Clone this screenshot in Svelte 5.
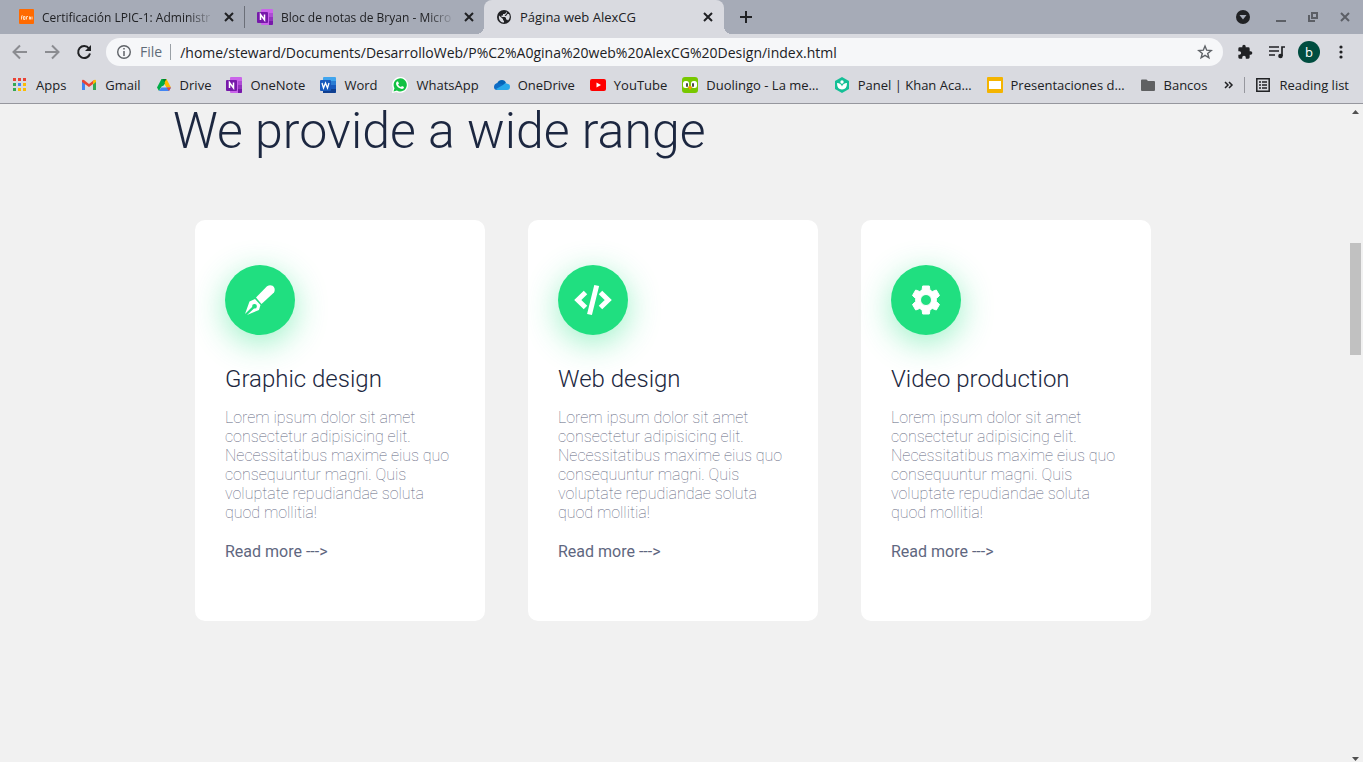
<script>
  const tabs = [
    { icon: 'orange', title: 'Certificación LPIC-1: Administr', active: false },
    { icon: 'onenote', title: 'Bloc de notas de Bryan - Micro', active: false },
    { icon: 'globe', title: 'Página web AlexCG', active: true }
  ];
  const bookmarks = [
    { icon: 'apps', label: 'Apps' },
    { icon: 'gmail', label: 'Gmail' },
    { icon: 'drive', label: 'Drive' },
    { icon: 'onenote', label: 'OneNote' },
    { icon: 'word', label: 'Word' },
    { icon: 'whatsapp', label: 'WhatsApp' },
    { icon: 'onedrive', label: 'OneDrive' },
    { icon: 'youtube', label: 'YouTube' },
    { icon: 'duolingo', label: 'Duolingo - La me…' },
    { icon: 'khan', label: 'Panel | Khan Aca…' },
    { icon: 'slides', label: 'Presentaciones d…' },
    { icon: 'folder', label: 'Bancos' }
  ];
  const services = [
    { icon: 'pen', title: 'Graphic design' },
    { icon: 'code', title: 'Web design' },
    { icon: 'gear', title: 'Video production' }
  ];
  const blurb =
    'Lorem ipsum dolor sit amet consectetur adipisicing elit. Necessitatibus maxime eius quo consequuntur magni. Quis voluptate repudiandae soluta quod mollitia!';
  const dots = ['#ea4335', '#ea4335', '#ea4335', '#34a853', '#4285f4', '#fbbc04', '#34a853', '#fbbc04', '#fbbc04'];
  let address = '/home/steward/Documents/DesarrolloWeb/P%C2%A0gina%20web%20AlexCG%20Design/index.html';
</script>

{#snippet site(name)}
  <svg class="fav" viewBox="0 0 16 16" aria-hidden="true">
    {#if name === 'orange'}
      <rect width="15" height="15" x="1" rx="1" fill="#ff6a00" />
      <path d="M3.500 10.500V7.500q0-1 1-1M3 8h1.500M5.500 7.500v3H7V7.500zM8.500 10.500V7.500H10M11.500 7.500v3M11.500 8h1v2.500M14 7.500v3" fill="none" stroke="#ffd9b8" />
    {:else if name === 'onenote'}
      <rect x="4" width="12" height="16" rx="1" fill="#ca64ea" />
      <path d="M12 4h4v4h-4z" fill="#ae4bd5" />
      <path d="M12 8h4v4h-4z" fill="#9332bf" />
      <path d="M12 12h4v3q0 1-1 1h-3z" fill="#7719aa" />
      <rect y="3" width="11" height="11" rx="1" fill="#7719aa" />
      <path d="M3.500 11V5.500L7.500 11V5.500" fill="none" stroke="#fff" stroke-width="1.500" />
    {:else if name === 'globe'}
      <circle cx="8" cy="8" r="7" fill="#202124" />
      <path d="M3 6.500 7 10v1l1 1v1.500C4.500 13.500 2.300 10.500 3 6.500zM10 2.500V4L8.500 5H7v1.500H5.500V8H9l1 1v1.500h1l1 1c2-2 2.200-4.500 1-6.500L11.500 5 10 7H8.500L11 4z" fill="#d9dae0" />
    {:else if name === 'apps'}
      {#each dots as color, i}
        <rect x={1 + (i % 3) * 5} y={1 + Math.floor(i / 3) * 5} width="3" height="3" fill={color} />
      {/each}
    {:else if name === 'gmail'}
      <path d="M1 4v9h3V6z" fill="#4285f4" />
      <path d="M12 6v7h3V4z" fill="#34a853" />
      <path d="M1 4q0-2 2-1l5 4 5-4-1 4-4 3-7-5z" fill="#ea4335" />
      <path d="m12 4 1-1q2-1 2 1v1l-3 2.500z" fill="#fbbc04" />
    {:else if name === 'drive'}
      <path d="m10.500 2 4.500 8.500h-4.500L5.500 2z" fill="#ffba00" />
      <path d="M5.500 2h5L8 6z" fill="#00832d" />
      <path d="M5.500 2h1L9 6.300l-1.300 2.200L5.500 9.500 3 14l-2-3.500z" fill="#00ac47" />
      <path d="M5.200 10.500H15L13 14H3z" fill="#4285f4" />
      <path d="M10.500 10.500H15L13 14z" fill="#ea4335" />
    {:else if name === 'word'}
      <rect x="3" width="13" height="16" rx="1" fill="#41a5ee" />
      <path d="M3 4h13v4H3z" fill="#2b7cd3" />
      <path d="M3 8h13v4H3z" fill="#185abd" />
      <path d="M3 12h13v3q0 1-1 1H3z" fill="#103f91" />
      <rect y="3" width="11" height="11" rx="1" fill="#185abd" />
      <path d="m2 6 1.500 5 2-5 2 5L9 6" fill="none" stroke="#fff" stroke-width="1.300" />
    {:else if name === 'whatsapp'}
      <path d="m0 16 1-4.500A8 8 0 1 1 4.500 15z" fill="#fff" />
      <path d="m1.500 14.500 1-3.300a6.600 6.600 0 1 1 2.400 2.400z" fill="#12c143" />
      <path d="M5 4.500h1l1 2-1 1q1 2 3 2.500l1-1 2 1q0 2-2 2-5-1-6-5 0-2 1-2.500z" fill="#fff" />
    {:else if name === 'onedrive'}
      <path d="M3 7q1-4 5-4 3 0 4 3l-4 4z" fill="#0364b8" />
      <path d="M0 10q0-3 3-4l5 1 4 4-9 2q-3 0-3-3z" fill="#0f6cc5" />
      <path d="m2 12 7-4q2-3 5-1 2 0 2 3t-3 3H4q-1 0-2-1z" fill="#28a8ea" />
    {:else if name === 'youtube'}
      <rect y="2" width="16" height="12" rx="2" fill="#f00" />
      <path d="m6.500 5.500 4.500 2.500-4.500 2.500z" fill="#fff" />
    {:else if name === 'duolingo'}
      <rect width="16" height="16" rx="3" fill="#78c800" />
      <rect x="1" y="4" width="6" height="7" rx="2.500" fill="#fff" />
      <rect x="9" y="4" width="6" height="7" rx="2.500" fill="#fff" />
      <rect x="4" y="6" width="2" height="4" rx="1" fill="#4b4b4b" />
      <rect x="10" y="6" width="2" height="4" rx="1" fill="#4b4b4b" />
      <path d="M6 10q2-2 4 0l-2 3z" fill="#ff9600" />
    {:else if name === 'khan'}
      <path d="m8 0 7 4v8l-7 4-7-4V4z" fill="#14bf96" />
      <circle cx="8" cy="5" r="1.700" fill="#fff" />
      <path d="M3 6q4 0 5 3.500Q9 6 13 6q0 6.500-5 6.500T3 6z" fill="#fff" />
    {:else if name === 'slides'}
      <rect width="16" height="16" rx="1" fill="#f4b400" />
      <path d="M2 4h12v8H2z" fill="#fff" />
    {:else if name === 'folder'}
      <path d="M1 3.500q0-1 1-1h4.500L8 4h6q1 0 1 1v8q0 1-1 1H2q-1 0-1-1z" fill="#5f6062" />
    {/if}
  </svg>
{/snippet}

<div class="window">
  <header>
    <div class="strip">
      {#each tabs as tab}
        <div class="tab" class:active={tab.active}>
          {@render site(tab.icon)}
          <span class="tab-title" class:fade={!tab.active}>{tab.title}</span>
          <button class="close" aria-label="Close tab">
            <svg width="10" height="10" viewBox="0 0 10 10"><path d="m1 1 8 8M9 1 1 9" /></svg>
          </button>
        </div>
      {/each}
      <button class="new-tab" aria-label="New tab">
        <svg width="12" height="12" viewBox="0 0 12 12"><path d="M6 0v12M0 6h12" /></svg>
      </button>
      <div class="win-controls">
        <button aria-label="Search tabs">
          <svg width="14" height="14" viewBox="0 0 14 14"><circle cx="7" cy="7" r="7" fill="#202124" /><path d="M3.500 5h7L7 9.500z" fill="#a6abb7" /></svg>
        </button>
        <button aria-label="Minimize">
          <svg width="10" height="10" viewBox="0 0 10 10"><path d="M0 9h10" class="ctl" /></svg>
        </button>
        <button aria-label="Restore">
          <svg width="10" height="10" viewBox="0 0 10 10"><path d="M4 1h5v5H4zM1 3v6h6" class="ctl" /></svg>
        </button>
        <button aria-label="Close window">
          <svg width="10" height="10" viewBox="0 0 10 10"><path d="m1 1 8 8M9 1 1 9" class="ctl" /></svg>
        </button>
      </div>
    </div>

    <div class="toolbar">
      <div class="nav">
        <button aria-label="Back"><svg width="16" height="16" viewBox="0 0 16 16"><path d="M15 8H2M8 1.500 1.500 8 8 14.500" class="faded" /></svg></button>
        <button aria-label="Forward"><svg width="16" height="16" viewBox="0 0 16 16"><path d="M1 8h13M8 1.500 14.500 8 8 14.500" class="faded" /></svg></button>
        <button aria-label="Reload"><svg width="16" height="16" viewBox="0 0 16 16"><path d="M13 4.500A6 6 0 1 0 14 9.500" fill="none" stroke="#202124" stroke-width="2" /><path d="M15 1v6H9z" fill="#202124" /></svg></button>
      </div>
      <div class="omnibox">
        <svg width="16" height="16" viewBox="0 0 16 16"><circle cx="8" cy="8" r="6.300" fill="none" stroke="#5f6368" stroke-width="1.400" /><path d="M8 7v5M8 4v1.500" stroke="#5f6368" stroke-width="1.500" /></svg>
        <label for="address">File</label>
        <input id="address" type="text" bind:value={address} spellcheck="false" />
        <button aria-label="Bookmark this page">
          <svg width="16" height="16" viewBox="0 0 16 16"><path d="m8 2 1.700 4.200 4.500.3-3.500 2.900 1.200 4.400L8 11.400l-3.900 2.400 1.200-4.400-3.500-2.900 4.500-.3z" fill="none" stroke="#5f6368" stroke-width="1.400" /></svg>
        </button>
      </div>
      <div class="tools">
        <button aria-label="Extensions">
          <svg width="16" height="16" viewBox="0 0 24 24"><path d="M20.500 11H19V7a2 2 0 0 0-2-2h-4V3.500a2.500 2.500 0 0 0-5 0V5H4a2 2 0 0 0-2 2v3.800h1.500a2.700 2.700 0 0 1 0 5.400H2V20a2 2 0 0 0 2 2h3.800v-1.500a2.700 2.700 0 0 1 5.400 0V22H17a2 2 0 0 0 2-2v-4h1.500a2.500 2.500 0 0 0 0-5z" fill="#202124" /></svg>
        </button>
        <button aria-label="Media controls">
          <svg width="16" height="16" viewBox="0 0 16 16"><path d="M0 3h10M0 7h10M0 11h6M13 12V3h3" fill="none" stroke="#202124" stroke-width="1.700" /><circle cx="11.500" cy="12" r="2.300" fill="#202124" /></svg>
        </button>
        <button class="avatar" aria-label="Profile">b</button>
        <button aria-label="Menu">
          <svg width="16" height="16" viewBox="0 0 16 16" fill="#202124"><circle cx="8" cy="3" r="1.600" /><circle cx="8" cy="8" r="1.600" /><circle cx="8" cy="13" r="1.600" /></svg>
        </button>
      </div>
    </div>

    <nav class="bookmarks" aria-label="Bookmarks">
      {#each bookmarks as item}
        <a href="#top">{@render site(item.icon)}<span>{item.label}</span></a>
      {/each}
      <div class="extra">
        <button aria-label="More bookmarks">
          <svg width="10" height="8" viewBox="0 0 10 8"><path d="m1 1 3 3-3 3M5 1l3 3-3 3" fill="none" stroke="#202124" stroke-width="1.500" /></svg>
        </button>
        <button class="reading">
          <svg class="fav" viewBox="0 0 16 16"><path d="M1.800 1.800h12.400v12.400H1.800z" fill="none" stroke="#202124" stroke-width="1.500" /><path d="M4 5h2M4 8h2M4 11h2M7 5h5M7 8h5M7 11h5" stroke="#202124" stroke-width="1.500" /></svg>
          <span>Reading list</span>
        </button>
      </div>
    </nav>
  </header>

  <div class="view">
    <main id="top">
      <section>
        <h1>We provide a wide range</h1>
        <div class="cards">
          {#each services as service}
            <article>
              <div class="badge">
                {#if service.icon === 'pen'}
                  <svg width="40" height="40" viewBox="0 0 40 40" fill="#fff"><path d="m16 17.500 11-11.300c5-3 9.500 1.500 7 6.300L21.500 24z" /><path fill-rule="evenodd" d="m15 19 5.500 6-1.500 5-12 5 7-6.500a2.300 2.300 0 1 0-1.700-1.700L5 34l4.500-12.500z" /></svg>
                {:else if service.icon === 'code'}
                  <svg width="40" height="40" viewBox="0 0 40 40" fill="none" stroke="#fff" stroke-width="5"><path d="M23.700 5.500 16.500 34.500M12.500 12.500 4.800 20l7.700 7.500M27.500 12.500l7.700 7.500-7.700 7.500" /></svg>
                {:else}
                  <svg width="40" height="40" viewBox="0 0 40 40" fill="#fff" stroke="#fff" stroke-linejoin="round"><path fill-rule="evenodd" d="M16.700 6h6.600l.7 4.200 2.300 1.300 4-1.500 3.200 5.500-3.200 3v3l3.200 3-3.200 5.500-4-1.500-2.300 1.300-.7 4.200h-6.600l-.7-4.200-2.300-1.300-4 1.500-3.200-5.500 3.200-3v-3l-3.200-3L9.700 10l4 1.500 2.300-1.300zM20 14.500a5.500 5.500 0 1 0 0 11 5.500 5.500 0 0 0 0-11z" /></svg>
                {/if}
              </div>
              <h2>{service.title}</h2>
              <p>{blurb}</p>
              <a href="#top">Read more ---&gt;</a>
            </article>
          {/each}
        </div>
      </section>
    </main>
    <div class="scrollbar" aria-hidden="true">
      <svg width="15" height="15" viewBox="0 0 15 15"><path d="M4 10h7L7.500 6z" fill="#505050" /></svg>
      <div class="before"></div>
      <div class="thumb"></div>
      <div class="after"></div>
      <svg width="15" height="15" viewBox="0 0 15 15"><path d="M4 10h7L7.500 14z" fill="#505050" /></svg>
    </div>
  </div>
</div>

<style>
  :global(body) {
    margin: 0;
  }
  .window {
    display: flex;
    flex-direction: column;
    min-height: 100vh;
    background: #f1f1f1;
    font-family: 'Open Sans', 'Noto Sans', sans-serif;
    font-size: 13px;
    color: #202124;
  }
  button {
    display: flex;
    align-items: center;
    justify-content: center;
    padding: 0;
    border: 0;
    background: none;
    font: inherit;
    color: inherit;
  }
  svg {
    display: block;
    flex: none;
  }
  a {
    color: inherit;
    text-decoration: none;
  }
  .fav {
    width: 16px;
    height: 16px;
  }
  header {
    background: #d9dae0;
    border-bottom: 1px solid #96979e;
  }
  .strip {
    display: flex;
    height: 34px;
    padding-left: 6px;
    background: #a6abb7;
  }
  .tab {
    display: flex;
    align-items: center;
    gap: 8px;
    box-sizing: border-box;
    width: 239px;
    padding: 0 9px 0 12px;
  }
  .tab:first-child {
    border-right: 1px solid #6b6f78;
    border-image: linear-gradient(transparent 7px, #6b6f78 7px 27px, transparent 27px) 1;
  }
  .tab.active {
    position: relative;
    width: 240px;
    padding-right: 10px;
    background: #d9dae0;
    border-radius: 8px 8px 0 0;
  }
  .tab.active::before,
  .tab.active::after {
    content: '';
    position: absolute;
    bottom: 0;
    width: 8px;
    height: 8px;
  }
  .tab.active::before {
    right: 100%;
    background: radial-gradient(circle at 0 0, transparent 8px, #d9dae0 8px);
  }
  .tab.active::after {
    left: 100%;
    background: radial-gradient(circle at 100% 0, transparent 8px, #d9dae0 8px);
  }
  .tab-title {
    flex: 1;
    min-width: 0;
    white-space: nowrap;
  }
  .tab-title.fade {
    font-size: 12px;
    mask-image: linear-gradient(to right, #000 calc(100% - 28px), transparent);
  }
  .close {
    width: 12px;
    height: 16px;
  }
  .close path,
  .new-tab path {
    stroke: #202124;
    stroke-width: 2;
  }
  .new-tab {
    width: 44px;
  }
  .win-controls {
    display: flex;
    align-items: center;
    gap: 22px;
    margin-left: auto;
    padding-right: 13px;
  }
  .win-controls .ctl {
    fill: none;
    stroke: #5c5f66;
    stroke-width: 2;
  }
  .win-controls button:first-child {
    margin-right: 4px;
  }
  .toolbar {
    display: flex;
    align-items: center;
    height: 36px;
    padding: 0 14px 0 12px;
  }
  .nav {
    display: flex;
    gap: 16px;
    margin-right: 14px;
  }
  .faded {
    fill: none;
    stroke: #8b8c91;
    stroke-width: 2;
  }
  .omnibox {
    display: flex;
    flex: 1;
    align-items: center;
    height: 28px;
    padding: 0 10px;
    border-radius: 14px;
    background: #f6f7f9;
    font-size: 14px;
  }
  .omnibox label {
    margin-left: 8px;
    padding-right: 8px;
    border-right: 1px solid #9aa0a6;
    line-height: 16px;
    color: #5f6b78;
  }
  .omnibox input {
    flex: 1;
    min-width: 0;
    padding: 0 0 0 9px;
    border: 0;
    outline: 0;
    background: none;
    font: inherit;
    color: #202124;
  }
  .tools {
    display: flex;
    align-items: center;
    gap: 13px;
    margin-left: 14px;
  }
  .tools button:first-child {
    margin-right: 3px;
  }
  .avatar {
    width: 22px;
    height: 22px;
    border-radius: 50%;
    background: #004d40;
    color: #fff;
  }
  .bookmarks {
    display: flex;
    align-items: center;
    gap: 15px;
    height: 30px;
    padding: 0 14px 3px 12px;
    white-space: nowrap;
  }
  .bookmarks a,
  .reading {
    display: flex;
    align-items: center;
    gap: 8px;
  }
  .extra {
    display: flex;
    align-items: center;
    gap: 10px;
    margin-left: auto;
  }
  .reading {
    padding-left: 10px;
    border-left: 1px solid #96979e;
    line-height: 16px;
  }
  .view {
    display: flex;
    flex: 1;
    font-family: Roboto, sans-serif;
  }
  main {
    flex: 1;
  }
  section {
    max-width: 1002px;
    margin: 0 auto;
  }
  h1 {
    margin: 0 0 62px;
    font-size: 50px;
    font-weight: 300;
    line-height: 54px;
    color: #1c2740;
  }
  .cards {
    display: grid;
    grid-template-columns: repeat(3, 1fr);
    gap: 43px;
    padding: 0 24px 0 22px;
  }
  article {
    padding: 45px 30px 60px;
    border-radius: 10px;
    background: #fff;
    font-size: 16px;
    line-height: 19px;
  }
  .badge {
    display: flex;
    align-items: center;
    justify-content: center;
    width: 70px;
    height: 70px;
    margin-bottom: 30px;
    border-radius: 50%;
    background: #20df80;
    box-shadow: 0 8px 32px rgba(32, 223, 128, 0.45);
  }
  h2 {
    margin: 0 0 15px;
    font-size: 24px;
    font-weight: 300;
    line-height: 28px;
    color: #1c2740;
  }
  p {
    margin: 0 0 20px;
    font-weight: 100;
    color: #5f6780;
  }
  article a {
    display: block;
    color: #5f6780;
  }
  .scrollbar {
    display: flex;
    flex-direction: column;
    width: 15px;
  }
  .before {
    flex: 124;
  }
  .thumb {
    flex: 112;
    margin: 0 2px;
    background: #c1c1c1;
  }
  .after {
    flex: 392;
  }
</style>
